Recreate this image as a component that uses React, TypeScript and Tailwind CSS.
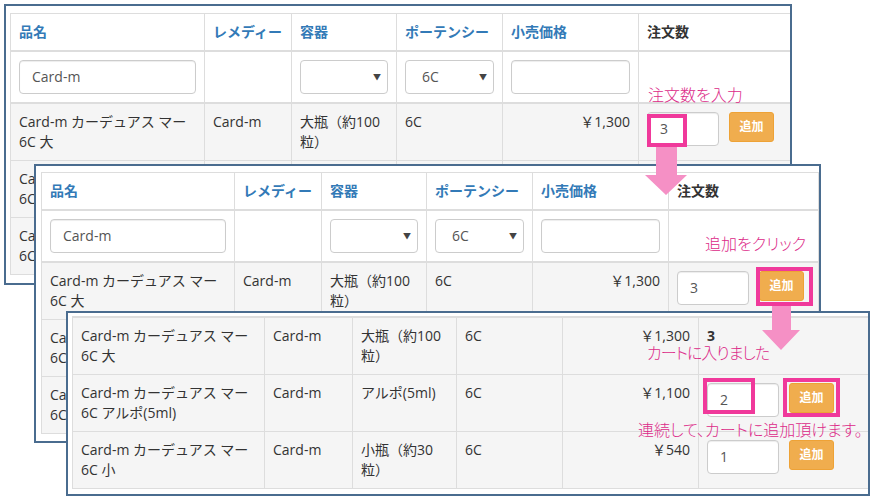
import React from "react";

type Item = {
  name: string[];
  remedy: string;
  vessel: string[];
  potency: string;
  price: string;
};

type Order = { qty?: string; added?: string };

const ITEMS: Item[] = [
  { name: ["Card-m カーデュアス マー", "6C 大"], remedy: "Card-m", vessel: ["大瓶（約100", "粒）"], potency: "6C", price: "￥1,300" },
  { name: ["Card-m カーデュアス マー", "6C アルポ(5ml)"], remedy: "Card-m", vessel: ["アルポ(5ml)"], potency: "6C", price: "￥1,100" },
  { name: ["Card-m カーデュアス マー", "6C 小"], remedy: "Card-m", vessel: ["小瓶（約30", "粒）"], potency: "6C", price: "￥540" },
];

const td = "border border-[#ddd] p-2 align-top";
const th = "border border-[#ddd] border-b-2 p-2 align-top text-left font-bold";
const filter = "border border-[#ddd] border-b-2 p-2 align-top text-left font-normal";

function TextInput({ value }: { value?: string }) {
  return (
    <div className="h-[34px] w-full rounded border border-[#ccc] bg-white px-3 flex items-center text-[#555] shadow-[inset_0_1px_1px_rgba(0,0,0,0.075)]">
      {value}
    </div>
  );
}

function Select({ value }: { value?: string }) {
  return (
    <div className="h-[34px] w-full rounded border border-[#ccc] bg-white pl-4 pr-[6px] flex items-center justify-between text-[#555]">
      <span>{value}</span>
      <span className="text-[8px] text-[#444]">▼</span>
    </div>
  );
}

function OrderCell({ order }: { order: Order }) {
  if (order.added) return <span className="font-bold">{order.added}</span>;
  return (
    <div className="flex items-start gap-[10px]">
      <div className="h-[34px] w-[72px] shrink-0 rounded border border-[#ccc] bg-white px-3 flex items-center text-[#555] shadow-[inset_0_1px_1px_rgba(0,0,0,0.075)]">
        {order.qty}
      </div>
      <button className="h-[30px] w-[45px] shrink-0 rounded-[3px] border border-[#eea236] bg-[#f0ad4e] text-[12px] font-semibold text-white">
        追加
      </button>
    </div>
  );
}

function OrderTable({
  tableClass,
  cols,
  header,
  orders,
}: {
  tableClass: string;
  cols: string[];
  header: boolean;
  orders: Order[];
}) {
  return (
    <table className={`table-fixed border-collapse text-[14px] leading-[20px] text-[#333] ${tableClass}`}>
      <colgroup>
        {cols.map((c, i) => (
          <col key={i} className={c} />
        ))}
      </colgroup>
      {header && (
        <thead>
          <tr className="bg-white">
            <th className={`${th} text-[#337ab7]`}>品名</th>
            <th className={`${th} text-[#337ab7]`}>レメディー</th>
            <th className={`${th} text-[#337ab7]`}>容器</th>
            <th className={`${th} text-[#337ab7]`}>ポーテンシー</th>
            <th className={`${th} text-[#337ab7]`}>小売価格</th>
            <th className={th}>注文数</th>
          </tr>
          <tr className="bg-white">
            <td className={filter}><TextInput value="Card-m" /></td>
            <td className={filter}></td>
            <td className={filter}><Select /></td>
            <td className={filter}><Select value="6C" /></td>
            <td className={filter}><TextInput /></td>
            <td className={filter}></td>
          </tr>
        </thead>
      )}
      <tbody>
        {ITEMS.map((it, i) => {
          const top = !header && i === 0 ? "border-t-2" : "";
          return (
            <tr key={i} className="bg-[#f5f5f5]">
              <td className={`${td} ${top} whitespace-nowrap`}>
                {it.name[0]}
                <br />
                {it.name[1]}
              </td>
              <td className={`${td} ${top}`}>{it.remedy}</td>
              <td className={`${td} ${top} whitespace-nowrap`}>
                {it.vessel[0]}
                {it.vessel[1] && <br />}
                {it.vessel[1]}
              </td>
              <td className={`${td} ${top}`}>{it.potency}</td>
              <td className={`${td} ${top} text-right`}>{it.price}</td>
              <td className={`${td} ${top}`}>
                <OrderCell order={orders[i]} />
              </td>
            </tr>
          );
        })}
      </tbody>
    </table>
  );
}

function Note({ className, children }: { className: string; children: React.ReactNode }) {
  return (
    <div
      className={`absolute whitespace-nowrap text-[16px] leading-none font-light text-[#dc2a88] [font-feature-settings:'palt'] ${className}`}
    >
      {children}
    </div>
  );
}

export default function App() {
  return (
    <div className="relative w-[877px] h-[501px] overflow-hidden bg-white font-['Open_Sans','Noto_Sans_CJK_JP',sans-serif]">
      {/* step 1 */}
      <div className="absolute left-[4px] top-[4px] w-[788px] h-[281px] overflow-hidden border-2 border-[#4a6c8f] bg-white pl-[4px] pt-[7px]">
        <OrderTable
          tableClass="w-[780px]"
          cols={["w-[194px]", "w-[87px]", "w-[105px]", "w-[106px]", "w-[136px]", "w-[152px]"]}
          header
          orders={[{ qty: "3" }, {}, {}]}
        />
      </div>

      {/* step 2 */}
      <div className="absolute left-[34px] top-[164px] w-[787px] h-[279px] overflow-hidden border-2 border-[#4a6c8f] bg-white pl-[5px] pt-[6px]">
        <OrderTable
          tableClass="w-[777px]"
          cols={["w-[193px]", "w-[87px]", "w-[105px]", "w-[106px]", "w-[136px]", "w-[150px]"]}
          header
          orders={[{ qty: "3" }, {}, {}]}
        />
      </div>

      {/* step 3 */}
      <div className="absolute left-[66px] top-[311px] w-[804px] h-[185px] overflow-hidden border-2 border-[#4a6c8f] bg-white pl-[4px] pt-[3px]">
        <OrderTable
          tableClass="w-[796px]"
          cols={["w-[192px]", "w-[88px]", "w-[104px]", "w-[106px]", "w-[136px]", "w-[170px]"]}
          header={false}
          orders={[{ added: "3" }, { qty: "2" }, { qty: "1" }]}
        />
      </div>

      {/* highlight boxes */}
      <div className="absolute left-[647px] top-[114px] w-[40px] h-[33px] border-4 border-[#f0399b]" />
      <div className="absolute left-[756px] top-[267px] w-[57px] h-[39px] border-4 border-[#f0399b]" />
      <div className="absolute left-[703px] top-[378px] w-[52px] h-[36px] border-4 border-[#f0399b]" />
      <div className="absolute left-[783px] top-[378px] w-[57px] h-[39px] border-4 border-[#f0399b]" />

      {/* arrows */}
      <svg className="absolute left-[645px] top-[147px]" width="42" height="48" viewBox="0 0 42 48">
        <polygon points="11,0 32,0 32,28 42,28 21,48 0,28 11,28" fill="#f590c5" />
      </svg>
      <svg className="absolute left-[762px] top-[306px]" width="38" height="44" viewBox="0 0 38 44">
        <polygon points="10,0 29,0 29,24 38,24 19,44 0,24 10,24" fill="#f590c5" />
      </svg>

      {/* notes */}
      <Note className="left-[648px] top-[87px]">注文数を入力</Note>
      <Note className="left-[705px] top-[236px]">追加をクリック</Note>
      <Note className="left-[647px] top-[345px] tracking-[-1px]">カートに入りました</Note>
      <Note className="left-[638px] top-[422px]">連続して、カートに追加頂けます。</Note>
    </div>
  );
}
